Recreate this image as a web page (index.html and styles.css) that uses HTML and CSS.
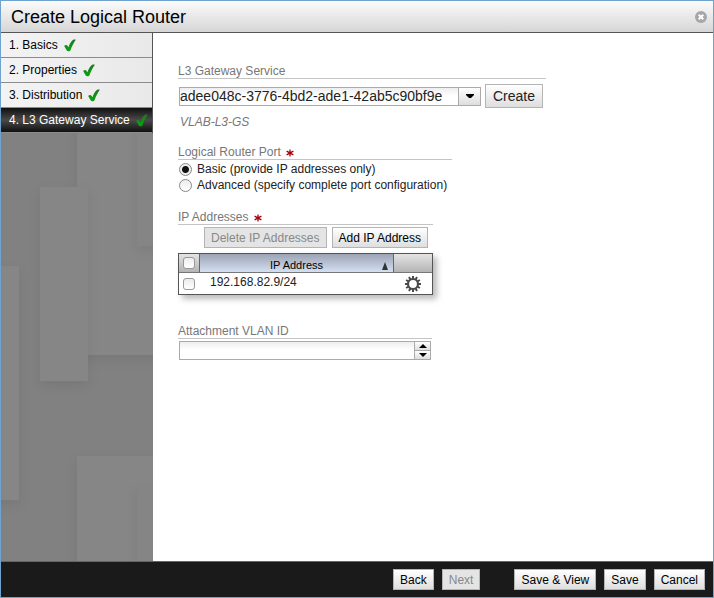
FILE: index.html
```html
<!DOCTYPE html>
<html lang="en">
<head>
<meta charset="utf-8">
<title>Create Logical Router</title>
<link rel="stylesheet" href="styles.css">
</head>
<body>
<svg class="defs" aria-hidden="true">
  <defs>
    <linearGradient id="green" x1="0" y1="0" x2="0" y2="1">
      <stop offset="0" stop-color="#2a702a"/>
      <stop offset="0.5" stop-color="#0c9212"/>
      <stop offset="1" stop-color="#08a510"/>
    </linearGradient>
    <symbol id="check" viewBox="0 0 12 13">
      <path fill="url(#green)" d="M0.2 7C1 5.8 3 5.8 3.6 6.9L4.5 8.2C5.6 4.8 7.2 1.9 9.2 0.7C10 0.3 11.2 0.3 11.8 0.7C9.8 3.6 8 7 6.7 10.8C6.1 12.6 3.4 12.9 2.6 11.3Z"/>
    </symbol>
    <symbol id="star" viewBox="0 0 8 8">
      <path fill="none" stroke="#a5000e" stroke-width="1.3" d="M4 0.4V7.6M0.6 2.1L7.4 5.9M7.4 2.1L0.6 5.9"/>
    </symbol>
  </defs>
</svg>
<div class="dialog">
  <header class="titlebar">
    <h1>Create Logical Router</h1>
    <button class="close" type="button" aria-label="Close">
      <svg viewBox="0 0 12 12"><circle cx="6" cy="6" r="6" fill="#a6a6a6"/><path d="M3.7 3.7L8.3 8.3M8.3 3.7L3.7 8.3" stroke="#fff" stroke-width="2"/></svg>
    </button>
  </header>
  <div class="body">
    <aside class="sidebar">
      <nav class="steps">
        <a href="#basics">1. Basics <svg><use href="#check"/></svg></a>
        <a href="#properties">2. Properties <svg><use href="#check"/></svg></a>
        <a href="#distribution">3. Distribution <svg><use href="#check"/></svg></a>
        <a class="current" href="#gateway" aria-current="step">4. L3 Gateway Service <svg><use href="#check"/></svg></a>
      </nav>
      <div class="backdrop">
        <svg viewBox="0 0 152 428" preserveAspectRatio="xMinYMin slice" aria-hidden="true">
          <defs>
            <filter id="soft" x="-60%" y="-30%" width="220%" height="160%">
              <feDropShadow dx="0" dy="5" stdDeviation="6" flood-color="#000" flood-opacity="0.07"/>
            </filter>
          </defs>
          <rect width="152" height="428" fill="#818181"/>
          <rect x="76" y="-60" width="130" height="282" fill="#868686" filter="url(#soft)"/>
          <rect x="136" y="-60" width="60" height="173" fill="#858585" filter="url(#soft)"/>
          <rect x="-60" y="133" width="78" height="234" fill="#868686" filter="url(#soft)"/>
          <rect x="39" y="54" width="48" height="194" fill="#868686" filter="url(#soft)"/>
          <rect x="76" y="323" width="130" height="170" fill="#868686" filter="url(#soft)"/>
          <rect x="136" y="353" width="60" height="140" fill="#858585" filter="url(#soft)"/>
        </svg>
      </div>
    </aside>
    <main class="content" id="gateway">
      <section class="group service">
        <label class="heading" for="service">L3 Gateway Service</label>
        <div class="picker">
          <div class="combo">
            <select id="service"><option>adee048c-3776-4bd2-ade1-42ab5c90bf9e</option></select>
            <span class="drop"><svg viewBox="0 0 8 4"><path d="M0 0H8V1L5 4H3L0 1Z"/></svg></span>
          </div>
          <button class="btn large" type="button">Create</button>
        </div>
        <p class="hint">VLAB-L3-GS</p>
      </section>

      <fieldset class="group port">
        <legend class="heading">Logical Router Port <svg class="star"><use href="#star"/></svg></legend>
        <div class="options">
          <label class="option"><input type="radio" name="port" checked>Basic (provide IP addresses only)</label>
          <label class="option"><input type="radio" name="port">Advanced (specify complete port configuration)</label>
        </div>
      </fieldset>

      <section class="group addresses">
        <h2 class="heading">IP Addresses <svg class="star"><use href="#star"/></svg></h2>
        <div class="tools">
          <button class="btn" type="button" disabled>Delete IP Addresses</button>
          <button class="btn" type="button">Add IP Address</button>
        </div>
        <table>
          <colgroup><col class="pick"><col><col class="act"></colgroup>
          <thead>
            <tr>
              <th><input type="checkbox" aria-label="Select all"></th>
              <th class="sorted"><div>IP Address<svg viewBox="0 0 6 8"><path d="M3 0L6 8H0Z"/></svg></div></th>
              <th></th>
            </tr>
          </thead>
          <tbody>
            <tr>
              <td><input type="checkbox" aria-label="Select 192.168.82.9/24"></td>
              <td class="ip">192.168.82.9/24</td>
              <td>
                <button class="gear" type="button" aria-label="Actions">
                  <svg viewBox="0 0 16 16"><g fill="none" stroke="#4a4a4a"><circle cx="8" cy="8" r="5" stroke-width="2.2"/><path stroke-width="2" d="M8 0V3M8 13V16M0 8H3M13 8H16M4 1.1L5.5 3.7M10.5 12.3L12 14.9M1.1 4L3.7 5.5M12.3 10.5L14.9 12M12 1.1L10.5 3.7M5.5 12.3L4 14.9M14.9 4L12.3 5.5M3.7 10.5L1.1 12"/></g></svg>
                </button>
              </td>
            </tr>
          </tbody>
        </table>
      </section>

      <section class="group vlan">
        <label class="heading" for="vlan">Attachment VLAN ID</label>
        <div class="spinner">
          <input id="vlan" type="number">
          <div class="arrows">
            <button type="button" aria-label="Increase"><svg viewBox="0 0 8 4"><path d="M4 0L8 4H0Z"/></svg></button>
            <button type="button" aria-label="Decrease"><svg viewBox="0 0 8 4"><path d="M0 0H8L4 4Z"/></svg></button>
          </div>
        </div>
      </section>
    </main>
  </div>
  <footer class="actions">
    <div>
      <button class="btn" type="button">Back</button>
      <button class="btn" type="button" disabled>Next</button>
    </div>
    <div>
      <button class="btn" type="button">Save &amp; View</button>
      <button class="btn" type="button">Save</button>
      <button class="btn" type="button">Cancel</button>
    </div>
  </footer>
</div>
</body>
</html>
```
FILE: styles.css
```css
* {
  box-sizing: border-box;
}

body {
  margin: 0;
  font: 12px/16px "Liberation Sans", Arial, sans-serif;
  color: #222;
}

button,
input,
select {
  font: inherit;
  color: inherit;
  margin: 0;
}

svg {
  display: block;
}

.defs {
  position: absolute;
  width: 0;
  height: 0;
}

.dialog {
  display: flex;
  flex-direction: column;
  min-height: 100vh;
  border: 1px solid #6fa2cf;
  background: #fff;
}

.titlebar {
  display: flex;
  align-items: center;
  justify-content: space-between;
  height: 32px;
  padding: 0 6px 0 10px;
  border-bottom: 1px solid #555;
  background: linear-gradient(#fbfbfb, #d6d6d6);
}

h1 {
  margin: 0;
  font-size: 18px;
  line-height: 24px;
  font-weight: normal;
  color: #000;
}

.close {
  padding: 0;
  border: 0;
  background: none;
}

.close svg {
  width: 12px;
  height: 12px;
}

.body {
  display: flex;
  flex: 1;
}

.sidebar {
  display: flex;
  flex-direction: column;
  width: 152px;
}

.steps {
  border-right: 1px solid #555;
}

.steps a {
  display: flex;
  align-items: center;
  gap: 6px;
  height: 25px;
  padding-left: 8px;
  border-bottom: 1px solid #8c8c8c;
  background: linear-gradient(90deg, #f3f3f3, #e9e9e9);
  color: #000;
  text-decoration: none;
  white-space: nowrap;
}

.steps svg {
  flex: none;
  width: 12px;
  height: 13px;
}

.steps .current {
  background: linear-gradient(#101010, #4a4a4a 50%, #101010);
  color: #fff;
}

.backdrop {
  flex: 1;
  overflow: hidden;
  background: #818181;
}

.backdrop svg {
  width: 100%;
}

.content {
  flex: 1;
  padding: 30px 25px;
}

.group {
  min-width: 0;
  margin: 0;
  padding: 0;
  border: 0;
}

.heading {
  display: flex;
  align-items: center;
  gap: 5px;
  width: 100%;
  margin: 0;
  padding: 2px 0 0;
  border-bottom: 1px solid #c4c4c4;
  font-size: 12px;
  line-height: 13px;
  font-weight: normal;
  color: #777;
}

.star {
  width: 8px;
  height: 8px;
}

.service {
  max-width: 368px;
}

.picker {
  display: flex;
  align-items: center;
  gap: 4px;
  padding: 5px 0 0 1px;
}

.combo {
  position: relative;
  width: 302px;
}

.combo select {
  display: block;
  width: 100%;
  height: 19px;
  padding: 0;
  border: 1px solid #aaa;
  border-radius: 0;
  appearance: none;
  background: linear-gradient(#eee, #fff 8px);
  font-size: 14px;
  line-height: 17px;
}

.drop {
  position: absolute;
  top: 0;
  right: 0;
  bottom: 0;
  display: grid;
  place-items: center;
  width: 23px;
  border: 1px solid #aaa;
  background: linear-gradient(#fff, #dedede);
  pointer-events: none;
}

.btn {
  height: 21px;
  padding: 0 6px;
  border: 1px solid #b4b4b4;
  background: linear-gradient(#fff, #dedede);
  line-height: 18px;
  color: #000;
  white-space: nowrap;
}

.btn:disabled {
  background: #e4e4e4;
  color: #888;
}

.btn.large {
  height: 24px;
  padding: 0 7px;
  font-size: 14px;
  line-height: 20px;
  color: #222;
}

.hint {
  margin: 6px 0 0 2px;
  font-style: italic;
  color: #777;
}

.port {
  max-width: 274px;
  margin-top: 14px;
}

.options {
  padding: 1px 0 0 1px;
}

.option {
  display: flex;
  align-items: center;
  gap: 5px;
  white-space: nowrap;
}

input[type="radio"],
input[type="checkbox"] {
  appearance: none;
  flex: none;
  border: 1px solid #888;
  background: linear-gradient(#ececec, #fff);
}

input[type="radio"] {
  width: 13px;
  height: 13px;
  border-radius: 50%;
}

input[type="radio"]:checked {
  background: radial-gradient(circle, #111 3px, #eee 4px);
}

input[type="checkbox"] {
  display: block;
  width: 12px;
  height: 12px;
  margin: 0 auto;
  border-color: #999;
  border-radius: 3px;
}

.addresses {
  max-width: 255px;
  margin-top: 16px;
}

.tools {
  display: flex;
  justify-content: flex-end;
  gap: 5px;
  padding: 2px 5px 5px 0;
}

table {
  width: 100%;
  border: 1px solid #555;
  border-spacing: 0;
  table-layout: fixed;
  background: #fff;
  box-shadow: 4px 4px 6px #bbb;
}

.pick {
  width: 20px;
}

.act {
  width: 38px;
}

th,
td {
  height: 21px;
  padding: 0;
}

th {
  height: 19px;
  border-bottom: 1px solid #777;
  background: linear-gradient(#e4e4e4, #b4b4b4);
  font-size: 11px;
  line-height: 14px;
  font-weight: normal;
  color: #000;
}

th.sorted {
  border-right: 1px solid #666;
  border-left: 1px solid #666;
  background: linear-gradient(#9ca4b4, #d4dff2);
}

.sorted div {
  position: relative;
  padding-top: 3px;
}

.sorted svg {
  position: absolute;
  right: 5px;
  bottom: 2px;
  width: 6px;
  height: 8px;
  fill: #333;
}

.ip {
  padding: 0 0 3px 11px;
}

.gear {
  display: block;
  margin: 0 auto;
  padding: 0;
  border: 0;
  background: none;
}

.gear svg {
  width: 16px;
  height: 16px;
}

.vlan {
  max-width: 254px;
  margin-top: 28px;
}

.spinner {
  display: flex;
  height: 19px;
  margin: 2px 1px 0;
  border: 1px solid #aaa;
}

.spinner input {
  flex: 1;
  min-width: 0;
  padding: 0 2px;
  border: 0;
  appearance: textfield;
  background: linear-gradient(#eee, #fff 8px);
}

.arrows {
  display: grid;
  grid-template-rows: 1fr 1fr;
  gap: 1px;
  width: 16px;
  padding-left: 1px;
  background: #aaa;
}

.arrows button {
  display: grid;
  place-items: center;
  padding: 0;
  border: 0;
  background: linear-gradient(#fff, #dedede);
}

.arrows svg,
.drop svg {
  width: 8px;
  height: 4px;
}

.actions {
  display: flex;
  justify-content: flex-end;
  align-items: center;
  gap: 34px;
  height: 36px;
  padding-right: 8px;
  border-top: 1px solid #666;
  background: #1a1a1a;
}

.actions div {
  display: flex;
  gap: 8px;
}
```
